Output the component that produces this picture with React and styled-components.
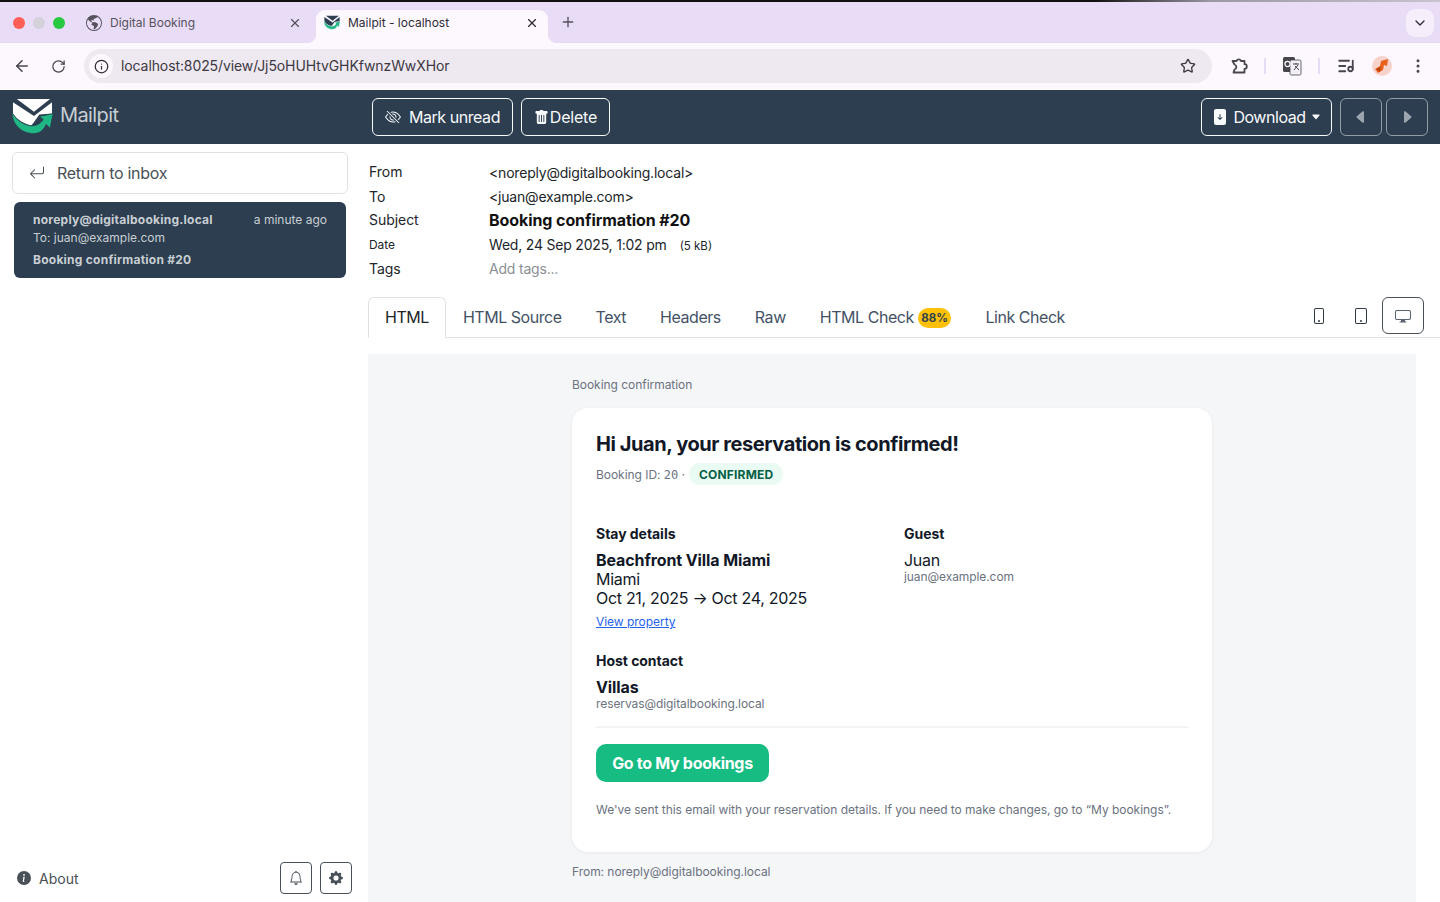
import styled, { createGlobalStyle } from 'styled-components';
import { ArrowLeft, RotateCw, Info, Star, EllipsisVertical, ListMusic, X, Plus, ChevronDown } from 'lucide-react';
import {
  BsEyeSlash,
  BsTrashFill,
  BsFileArrowDownFill,
  BsCaretLeftFill,
  BsCaretRightFill,
  BsCaretDownFill,
  BsArrowReturnLeft,
  BsInfoCircleFill,
  BsBell,
  BsGearFill,
  BsPhone,
  BsTablet,
  BsDisplay,
  BsGlobeAmericas,
} from 'react-icons/bs';

const GlobalStyle = createGlobalStyle`
  html, body {
    margin: 0;
    height: 100%;
    overflow: hidden;
    background: #fff;
    font-family: Inter, "Liberation Sans", sans-serif;
    color: #212529;
  }
  * { box-sizing: border-box; }
`;

const Logo = ({ size, paper = '#fff', ground = '#2c3e50' }) => (
  <svg width={size} height={size} viewBox="0 0 42 40">
    <path d="M5 1 H39 L22.5 14 Z" fill={paper} />
    <path d="M1 4.5 L22.5 18.5 L41 4.5 V16 L28 17 L23 24 L20 28 C12 27 5 22 1 16 Z" fill={paper} />
    <path
      d="M0 14 C-0.5 27 10 36.5 22 36.5 C29 36.5 33 32 35 27 L39 31 L42 16 L28 19 L32 22 C29 27 24 29 19 28.5 C11 27.5 4 22 0 15 Z"
      fill="#1fb784"
      stroke={ground}
      strokeWidth="0.7"
    />
  </svg>
);

const PuzzleIcon = () => (
  <svg width="20" height="20" viewBox="0 0 20 20" fill="none" stroke="#48454f" strokeWidth="1.8" strokeLinejoin="round">
    <path d="M3.5 5 H7.5 A2.4 2.4 0 0 1 12 5 H15.5 V8.2 A2.3 2.3 0 0 1 15.5 12.8 V16.5 H4.5 L5.5 13.5 A2.6 2.6 0 0 0 5.5 8.5 Z" />
  </svg>
);

const TranslateIcon = () => (
  <svg width="20" height="20" viewBox="0 0 20 20">
    <rect x="1" y="1" width="12" height="15" rx="1.5" fill="#48454f" />
    <rect x="8" y="4" width="11" height="15" rx="1.5" fill="#f3eff6" stroke="#48454f" strokeWidth="0.8" />
    <circle cx="5.5" cy="8" r="2.6" fill="none" stroke="#fff" strokeWidth="1.2" />
    <path d="M11 8 H17 M14 7 V8.5 M12 14 L16 9 M13 10 L17 14" stroke="#48454f" strokeWidth="1" fill="none" />
  </svg>
);

const AvatarIcon = () => (
  <svg width="20" height="20" viewBox="0 0 20 20">
    <circle cx="10" cy="10" r="10" fill="#f8d3cc" />
    <path d="M9 5 L16 3 L15 10 L12 9 L11 14 L6 17 L3 13 L8 10 Z" fill="#e8601c" />
    <path d="M4 13 L9 11 L8 16 Z" fill="#b8430e" />
  </svg>
);

const Page = styled.div`
  height: 100vh;
  display: flex;
  flex-direction: column;
  overflow: hidden;
`;

const TabStrip = styled.div`
  height: 43px;
  flex: none;
  display: flex;
  align-items: flex-end;
  padding-left: 13px;
  background: #e9dcf6;
  border-top: 2px solid;
  border-image: linear-gradient(90deg, #111 0, #111 76%, #9a98a0 84%, #c8c4cc 100%) 1;
`;

const TrafficLights = styled.div`
  display: flex;
  gap: 8px;
  align-self: center;
  margin-right: 19px;
`;

const Light = styled.span`
  width: 12px;
  height: 12px;
  border-radius: 50%;
  background: ${(p) => p.$color};
`;

const Tab = styled.div`
  position: relative;
  width: ${(p) => p.$width}px;
  height: 33px;
  display: flex;
  align-items: center;
  gap: 8px;
  padding: 0 ${(p) => (p.$active ? 9 : 14)}px 8px ${(p) => (p.$active ? 8 : 2)}px;
  font-size: 12px;
  color: ${(p) => (p.$active ? '#2f2c36' : '#55525c')};
  background: ${(p) => (p.$active ? '#fdf8fe' : 'transparent')};
  border-radius: 9px 9px 0 0;
  span {
    flex: 1;
  }
  ${(p) =>
    p.$active &&
    `
    &::before, &::after {
      content: '';
      position: absolute;
      bottom: 0;
      width: 9px;
      height: 9px;
    }
    &::before { left: -9px; background: radial-gradient(circle at 0 0, transparent 9px, #fdf8fe 9.5px); }
    &::after { right: -9px; background: radial-gradient(circle at 100% 0, transparent 9px, #fdf8fe 9.5px); }
  `}
`;

const NewTab = styled.div`
  align-self: center;
  display: flex;
  margin: 0 0 2px 12px;
  color: #55525c;
`;

const TabMenu = styled.div`
  margin-left: auto;
  margin-right: 6px;
  align-self: center;
  width: 28px;
  height: 28px;
  border-radius: 9px;
  background: #f6effb;
  display: flex;
  align-items: center;
  justify-content: center;
  color: #2f2c36;
`;

const BrowserBar = styled.div`
  height: 47px;
  flex: none;
  display: flex;
  align-items: center;
  padding: 0 12px 1px 12px;
  background: #fdf8fe;
  color: #48454f;
`;

const BarButton = styled.div`
  width: 20px;
  flex: none;
  display: flex;
  justify-content: center;
  margin-right: ${(p) => p.$gap || 0}px;
`;

const Omnibox = styled.div`
  width: 1128px;
  height: 34px;
  flex: none;
  margin: 0 17px 0 -1px;
  border-radius: 17px;
  background: #eee8f1;
  display: flex;
  align-items: center;
  padding: 0 16px 0 5px;
  font-size: 14px;
  letter-spacing: -0.1px;
  color: #3c3942;
`;

const InfoChip = styled.div`
  width: 24px;
  height: 24px;
  border-radius: 50%;
  background: #fdf8fe;
  display: flex;
  align-items: center;
  justify-content: center;
  margin-right: 8px;
  color: #2f2c36;
`;

const OmniText = styled.span`
  flex: 1;
  padding-bottom: 1px;
`;

const BarDivider = styled.div`
  width: 2px;
  height: 16px;
  flex: none;
  background: #e7dcf5;
  margin: 0 16px 0 ${(p) => p.$left || 16}px;
`;

const Navbar = styled.div`
  height: 54px;
  flex: none;
  display: flex;
  align-items: center;
  padding-right: 12px;
  background: #2c3e50;
`;

const Brand = styled.div`
  width: 372px;
  display: flex;
  align-items: center;
  gap: 7px;
  padding-left: 12px;
  font-size: 20px;
  letter-spacing: -0.6px;
  color: #c8ced4;
`;

const BrandName = styled.span`
  margin-bottom: 5px;
`;

const NavGroup = styled.div`
  display: flex;
  gap: ${(p) => p.$gap}px;
  margin-left: ${(p) => (p.$end ? 'auto' : '0')};
`;

const NavButton = styled.div`
  height: 38px;
  display: flex;
  align-items: center;
  gap: ${(p) => p.$gap}px;
  width: ${(p) => p.$width}px;
  justify-content: center;
  border: 1px solid ${(p) => (p.$disabled ? 'rgba(248,249,250,.5)' : '#f8f9fa')};
  border-radius: 6px;
  font-size: 16px;
  letter-spacing: ${(p) => p.$tight || 0}px;
  color: ${(p) => (p.$disabled ? 'rgba(248,249,250,.55)' : '#f8f9fa')};
  margin-left: ${(p) => p.$offset || 0}px;
`;

const Main = styled.div`
  flex: 1;
  min-height: 0;
  display: flex;
`;

const Sidebar = styled.aside`
  width: 368px;
  flex: none;
  display: flex;
  flex-direction: column;
  padding: 8px 16px 8px 12px;
`;

const ReturnLink = styled.div`
  height: 42px;
  width: 336px;
  display: flex;
  align-items: center;
  gap: 12px;
  padding-left: 16px;
  border: 1px solid #dee2e6;
  border-radius: 6px;
  font-size: 16px;
  letter-spacing: -0.3px;
  color: #495057;
`;

const MessageCard = styled.div`
  width: 332px;
  height: 76px;
  margin: 8px 0 0 2px;
  padding: 9px 19px;
  border-radius: 6px;
  background: #2c3e50;
  color: #c9ced3;
  font-size: 12px;
`;

const MessageTop = styled.div`
  display: flex;
  justify-content: space-between;
  line-height: 17px;
`;

const Strong = styled.span`
  font-weight: 700;
  letter-spacing: 0.25px;
`;

const MessageLine = styled.div`
  line-height: 20px;
  margin-bottom: ${(p) => p.$mb || 0}px;
`;

const SideFooter = styled.div`
  margin-top: auto;
  display: flex;
  align-items: center;
  padding-left: 5px;
  font-size: 14px;
  color: #495057;
`;

const AboutLabel = styled.span`
  margin-left: 8px;
  flex: 1;
`;

const SquareButton = styled.div`
  width: 32px;
  height: 32px;
  margin-left: 8px;
  display: flex;
  align-items: center;
  justify-content: center;
  border: 1px solid #495057;
  border-radius: 4px;
  color: #495057;
`;

const Content = styled.main`
  flex: 1;
  min-width: 0;
  display: flex;
  flex-direction: column;
`;

const HeaderTable = styled.div`
  padding: 16px 0 0 1px;
  height: 153px;
`;

const HeaderRow = styled.div`
  display: grid;
  grid-template-columns: 120px 1fr;
  height: 24px;
  align-items: center;
  font-size: 14px;
  color: #212529;
`;

const HeaderLabel = styled.div`
  font-size: ${(p) => p.$size || 14}px;
  letter-spacing: -0.05px;
  position: relative;
  top: ${(p) => p.$up || 0}px;
`;

const HeaderValue = styled.div`
  letter-spacing: -0.2px;
`;

const Subject = styled.div`
  font-size: 16px;
  font-weight: 700;
  letter-spacing: -0.08px;
  color: #111;
`;

const FileSize = styled.small`
  font-size: 11.5px;
  margin-left: 13px;
  letter-spacing: 0;
`;

const Muted = styled(HeaderValue)`
  color: #8a8f94;
`;

const TabBar = styled.div`
  height: 41px;
  flex: none;
  display: flex;
  align-items: flex-end;
  border-bottom: 1px solid #dee2e6;
`;

const ViewTab = styled.div`
  height: 41px;
  padding: 0 16px 2px;
  margin-bottom: -1px;
  display: flex;
  align-items: center;
  gap: 4px;
  font-size: 16px;
  letter-spacing: -0.46px;
  color: ${(p) => (p.$active ? '#212529' : '#445266')};
  border: 1px solid ${(p) => (p.$active ? '#dee2e6' : 'transparent')};
  border-bottom-color: ${(p) => (p.$active ? '#fff' : 'transparent')};
  border-radius: 6px 6px 0 0;
  background: ${(p) => (p.$active ? '#fff' : 'transparent')};
`;

const ScoreBadge = styled.span`
  font-size: 11.5px;
  font-weight: 700;
  letter-spacing: 0;
  height: 20px;
  line-height: 20px;
  padding: 0 3.5px;
  margin-top: 2px;
  border-radius: 10px;
  background: #ffc107;
  color: #2c3e50;
`;

const DeviceGroup = styled.div`
  margin-left: auto;
  margin-right: 16px;
  display: flex;
  align-self: flex-start;
`;

const DeviceButton = styled.div`
  width: 42px;
  height: 37px;
  display: flex;
  align-items: center;
  justify-content: center;
  color: ${(p) => (p.$active ? '#5a6470' : '#2f3a47')};
  border: 1px solid ${(p) => (p.$active ? '#495057' : 'transparent')};
  border-radius: 6px;
`;

const Preview = styled.div`
  flex: 1;
  min-height: 0;
  margin: 16px 24px 0 0;
  background: #f5f6f8;
  display: flex;
  justify-content: center;
  overflow: hidden;
`;

const Mail = styled.div`
  width: 640px;
  padding-top: 24px;
  font-size: 12px;
  letter-spacing: -0.04px;
  color: #6b7280;
`;

const Preheader = styled.div`
  line-height: 14px;
  height: 30px;
`;

const Card = styled.div`
  height: 444px;
  padding: 24px;
  background: #fff;
  border-radius: 16px;
  box-shadow: 0 1px 4px rgba(17, 24, 39, 0.06);
  color: #111827;
`;

const Heading = styled.h1`
  margin: 0;
  font-size: 20px;
  line-height: 24px;
  font-weight: 700;
  letter-spacing: -0.43px;
`;

const MetaRow = styled.div`
  margin-top: 7px;
  display: flex;
  align-items: center;
  gap: 4px;
  font-size: 12px;
  color: #6b7280;
`;

const Mono = styled.span`
  font-family: "DejaVu Sans Mono", "Liberation Mono", monospace;
  font-size: 12px;
`;

const Pill = styled.span`
  height: 22px;
  padding: 0 10px;
  display: flex;
  align-items: center;
  border-radius: 11px;
  background: #e9fbf3;
  color: #065f46;
  font-weight: 700;
  letter-spacing: 0.2px;
`;

const Columns = styled.div`
  margin-top: 39px;
  display: grid;
  grid-template-columns: 308px 1fr;
`;

const SectionTitle = styled.div`
  font-size: 14px;
  font-weight: 700;
  line-height: 20px;
  margin-bottom: 7px;
`;

const Line = styled.div`
  font-size: 16px;
  line-height: 19px;
  letter-spacing: ${(p) => (p.$bold ? '-0.1px' : '-0.3px')};
  font-weight: ${(p) => (p.$bold ? 700 : 400)};
`;

const Small = styled.div`
  margin-top: -1px;
  font-size: 12px;
  line-height: 15px;
  letter-spacing: -0.08px;
  color: #6b7280;
`;

const PropertyLink = styled.a`
  display: block;
  margin-top: 6px;
  font-size: 12px;
  line-height: 15px;
  color: #2563eb;
  text-decoration: underline;
`;

const HostBlock = styled.div`
  margin-top: 22px;
`;

const Rule = styled.div`
  height: 2px;
  margin-top: 15px;
  background: #f1f3f5;
`;

const CallToAction = styled.div`
  width: 173px;
  height: 38px;
  margin-top: 16px;
  display: flex;
  align-items: center;
  justify-content: center;
  border-radius: 10px;
  background: #16bc82;
  color: #fff;
  font-size: 16px;
  font-weight: 700;
  letter-spacing: -0.3px;
`;

const Note = styled.p`
  margin: 20px 0 0;
  font-size: 12px;
  line-height: 15px;
  color: #6b7280;
`;

const MailFooter = styled.div`
  margin-top: 12px;
  line-height: 15px;
`;

const tabs = ['HTML Source', 'Text', 'Headers', 'Raw'];

const App = () => (
  <Page>
    <GlobalStyle />
    <TabStrip>
      <TrafficLights>
        <Light $color="#ff5f57" />
        <Light $color="#d5d1da" />
        <Light $color="#28c840" />
      </TrafficLights>
      <Tab $width={232}>
        <BsGlobeAmericas size={16} />
        <span>Digital Booking</span>
        <X size={14} />
      </Tab>
      <Tab $width={232} $active>
        <Logo size={16} paper="#2c3e50" ground="#fdf8fe" />
        <span>Mailpit - localhost</span>
        <X size={14} />
      </Tab>
      <NewTab>
        <Plus size={16} />
      </NewTab>
      <TabMenu>
        <ChevronDown size={16} />
      </TabMenu>
    </TabStrip>

    <BrowserBar>
      <BarButton $gap={16}>
        <ArrowLeft size={18} />
      </BarButton>
      <BarButton $gap={17}>
        <RotateCw size={15} />
      </BarButton>
      <Omnibox>
        <InfoChip>
          <Info size={15} />
        </InfoChip>
        <OmniText>localhost:8025/view/Jj5oHUHtvGHKfwnzWwXHor</OmniText>
        <Star size={16} />
      </Omnibox>
      <BarButton>
        <PuzzleIcon />
      </BarButton>
      <BarDivider $left={15} />
      <TranslateIcon />
      <BarDivider />
      <BarButton $gap={16}>
        <ListMusic size={18} strokeWidth={2.4} />
      </BarButton>
      <AvatarIcon />
      <BarButton style={{ marginLeft: 16 }}>
        <EllipsisVertical size={18} />
      </BarButton>
    </BrowserBar>

    <Navbar>
      <Brand>
        <Logo size={41} />
        <BrandName>Mailpit</BrandName>
      </Brand>
      <NavGroup $gap={8}>
        <NavButton $width={141} $gap={8} $tight={-0.45}>
          <BsEyeSlash size={16} />
          Mark unread
        </NavButton>
        <NavButton $width={89} $gap={1} $tight={-0.2}>
          <BsTrashFill size={15} />
          Delete
        </NavButton>
      </NavGroup>
      <NavGroup $gap={4} $end>
        <NavButton $width={131} $gap={5} $tight={-0.45}>
          <BsFileArrowDownFill size={16} />
          Download
          <BsCaretDownFill size={10} />
        </NavButton>
        <NavButton $width={42} $disabled $offset={4}>
          <BsCaretLeftFill size={16} />
        </NavButton>
        <NavButton $width={42} $disabled>
          <BsCaretRightFill size={16} />
        </NavButton>
      </NavGroup>
    </Navbar>

    <Main>
      <Sidebar>
        <ReturnLink>
          <BsArrowReturnLeft size={16} />
          Return to inbox
        </ReturnLink>
        <MessageCard>
          <MessageTop>
            <Strong>noreply@digitalbooking.local</Strong>
            <span>a minute ago</span>
          </MessageTop>
          <MessageLine $mb={2}>To: juan@example.com</MessageLine>
          <MessageLine>
            <Strong>Booking confirmation #20</Strong>
          </MessageLine>
        </MessageCard>
        <SideFooter>
          <BsInfoCircleFill size={14} />
          <AboutLabel>About</AboutLabel>
          <SquareButton>
            <BsBell size={14} />
          </SquareButton>
          <SquareButton>
            <BsGearFill size={14} />
          </SquareButton>
        </SideFooter>
      </Sidebar>

      <Content>
        <HeaderTable>
          <HeaderRow>
            <HeaderLabel $up={-1}>From</HeaderLabel>
            <HeaderValue>&lt;noreply@digitalbooking.local&gt;</HeaderValue>
          </HeaderRow>
          <HeaderRow>
            <HeaderLabel>To</HeaderLabel>
            <HeaderValue>&lt;juan@example.com&gt;</HeaderValue>
          </HeaderRow>
          <HeaderRow>
            <HeaderLabel $up={-1}>Subject</HeaderLabel>
            <Subject>Booking confirmation #20</Subject>
          </HeaderRow>
          <HeaderRow>
            <HeaderLabel $size={12}>Date</HeaderLabel>
            <HeaderValue>
              Wed, 24 Sep 2025, 1:02 pm
              <FileSize>(5 kB)</FileSize>
            </HeaderValue>
          </HeaderRow>
          <HeaderRow>
            <HeaderLabel>Tags</HeaderLabel>
            <Muted>Add tags...</Muted>
          </HeaderRow>
        </HeaderTable>

        <TabBar>
          <ViewTab $active>HTML</ViewTab>
          {tabs.map((t) => (
            <ViewTab key={t}>{t}</ViewTab>
          ))}
          <ViewTab>
            HTML Check
            <ScoreBadge>88%</ScoreBadge>
          </ViewTab>
          <ViewTab>Link Check</ViewTab>
          <DeviceGroup>
            <DeviceButton>
              <BsPhone size={16} />
            </DeviceButton>
            <DeviceButton>
              <BsTablet size={16} />
            </DeviceButton>
            <DeviceButton $active>
              <BsDisplay size={16} />
            </DeviceButton>
          </DeviceGroup>
        </TabBar>

        <Preview>
          <Mail>
            <Preheader>Booking confirmation</Preheader>
            <Card>
              <Heading>Hi Juan, your reservation is confirmed!</Heading>
              <MetaRow>
                <span>
                  Booking ID: <Mono>20</Mono> ·
                </span>
                <Pill>CONFIRMED</Pill>
              </MetaRow>
              <Columns>
                <div>
                  <SectionTitle>Stay details</SectionTitle>
                  <Line $bold>Beachfront Villa Miami</Line>
                  <Line>Miami</Line>
                  <Line>Oct 21, 2025 → Oct 24, 2025</Line>
                  <PropertyLink>View property</PropertyLink>
                </div>
                <div>
                  <SectionTitle>Guest</SectionTitle>
                  <Line>Juan</Line>
                  <Small>juan@example.com</Small>
                </div>
              </Columns>
              <HostBlock>
                <SectionTitle>Host contact</SectionTitle>
                <Line $bold>Villas</Line>
                <Small>reservas@digitalbooking.local</Small>
              </HostBlock>
              <Rule />
              <CallToAction>Go to My bookings</CallToAction>
              <Note>We've sent this email with your reservation details. If you need to make changes, go to “My bookings”.</Note>
            </Card>
            <MailFooter>From: noreply@digitalbooking.local</MailFooter>
          </Mail>
        </Preview>
      </Content>
    </Main>
  </Page>
);

export default App;
